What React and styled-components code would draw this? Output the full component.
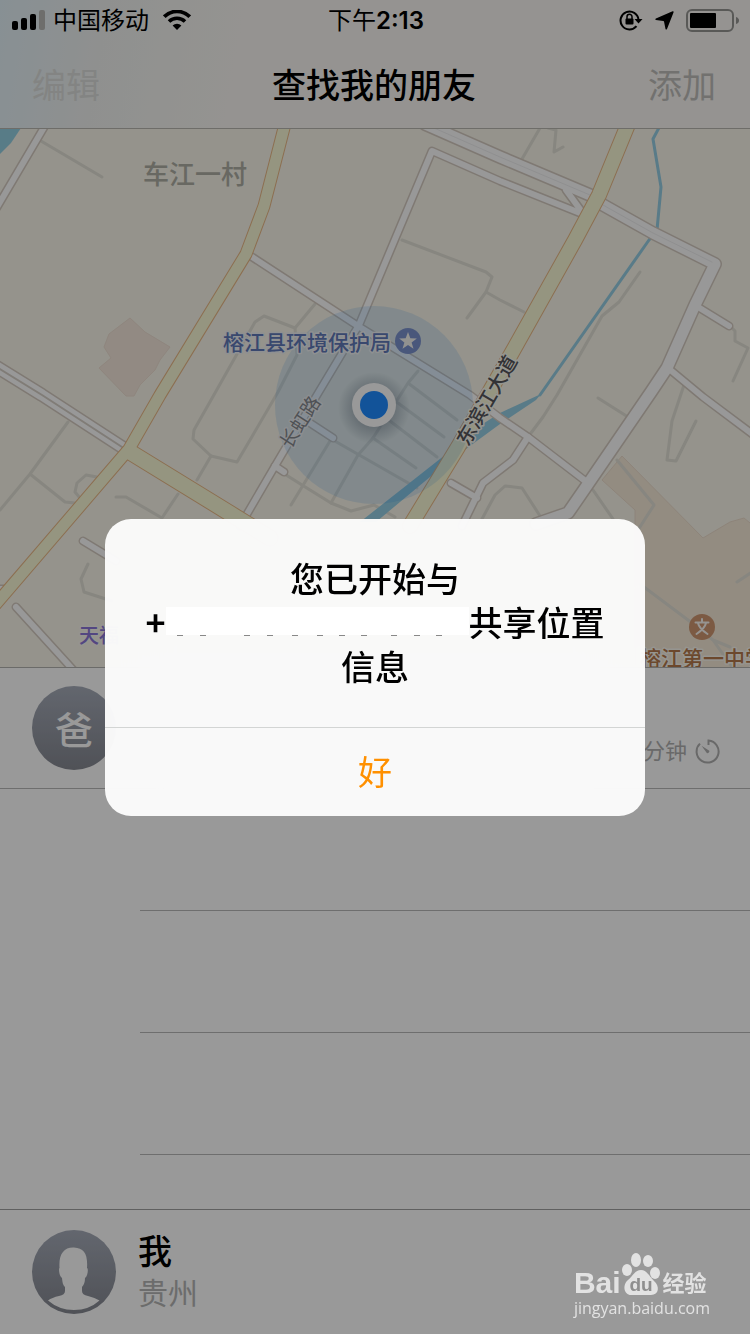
import React from "react";
import styled, { createGlobalStyle } from "styled-components";

const GlobalStyle = createGlobalStyle`
  *, *::before, *::after { box-sizing: border-box; }
  body {
    margin: 0;
    background: #fff;
    color: #000;
    font-family: Inter, "Noto Sans CJK SC", sans-serif;
  }
  button { font: inherit; border: 0; padding: 0; background: none; cursor: pointer; }
`;

const Screen = styled.div`
  position: relative;
  display: flex;
  flex-direction: column;
  min-height: 100vh;
`;

const Header = styled.header`
  background: linear-gradient(100deg, #e2f1f7 0%, #eff1ef 14%, #f8f6f2 32%, #f8f6f2 100%);
  border-bottom: 1px solid #b8b6b0;
`;

const StatusBar = styled.div`
  display: grid;
  grid-template-columns: 1fr auto 1fr;
  align-items: center;
  height: 40px;
  padding: 0 10px 0 12px;
  font-size: 24px;
  line-height: 40px;
`;

const StatusGroup = styled.div`
  display: flex;
  align-items: center;
  justify-content: ${(p) => (p.$end ? "flex-end" : "flex-start")};
  gap: ${(p) => (p.$end ? "12px" : "8px")};
  svg { display: block; flex: none; }
`;

const Carrier = styled.span`
  padding-top: 2px;
  margin-right: 6px;
  line-height: 38px;
`;

const Clock = styled.time`
  padding-top: 2px;
  line-height: 38px;
  font-weight: 600;
  span { font-weight: 400; }
`;

const NavBar = styled.nav`
  display: grid;
  grid-template-columns: 1fr auto 1fr;
  align-items: center;
  height: 88px;
  padding: 4px 34px 0 32px;
`;

const Title = styled.h1`
  margin: 0;
  font-size: 34px;
  line-height: 48px;
  font-weight: 500;
`;

const NavButton = styled.button`
  justify-self: ${(p) => (p.$end ? "end" : "start")};
  font-size: 34px;
  line-height: 48px;
  color: ${(p) => (p.$faint ? "#dbddda" : "#bebdba")};
`;

const MapPane = styled.section`
  height: 539px;
  border-bottom: 1px solid #b2b2b0;
  background: #f8f5e9;
  svg { display: block; width: 100%; height: 100%; }
`;

const MapText = styled.text`
  font-family: "Noto Sans CJK SC", sans-serif;
  font-size: ${(p) => p.$size}px;
  font-weight: ${(p) => p.$weight || 500};
  fill: ${(p) => p.$color};
  stroke: ${(p) => p.$halo || "#faf8f0"};
  stroke-width: 3px;
  stroke-linejoin: round;
  paint-order: stroke;
  text-anchor: ${(p) => p.$anchor || "start"};
`;

const List = styled.ul`
  flex: 1;
  margin: 0;
  padding: 0;
  list-style: none;
`;

const FriendRow = styled.li`
  display: flex;
  align-items: center;
  justify-content: space-between;
  height: 121px;
  padding: 0 30px 0 32px;
  border-bottom: 1px solid #b8b8b8;
`;

const EmptyRow = styled.li`
  height: 122px;
  margin-left: 140px;
  border-bottom: 1px solid #b8b8b8;
`;

const Avatar = styled.div`
  display: flex;
  align-items: center;
  justify-content: center;
  flex: none;
  width: 84px;
  height: 84px;
  border-radius: 50%;
  overflow: hidden;
  background: linear-gradient(#a5abb8, #858891);
  color: #fff;
  font-size: 38px;
  font-weight: 500;
  line-height: 84px;
  span { padding-top: 4px; }
  svg { display: block; }
`;

const Elapsed = styled.div`
  display: flex;
  align-items: center;
  gap: 8px;
  padding-top: 46px;
  color: #afafaf;
  font-size: 22px;
  line-height: 24px;
`;

const Footer = styled.footer`
  display: flex;
  align-items: center;
  gap: 22px;
  height: 125px;
  padding: 0 32px;
  border-top: 1px solid #a0a0a0;
`;

const Me = styled.div`
  display: flex;
  flex-direction: column;
`;

const MyName = styled.span`
  font-size: 34px;
  line-height: 42px;
  font-weight: 500;
`;

const MyPlace = styled.span`
  color: #b5b5b5;
  font-size: 30px;
  line-height: 40px;
`;

const Overlay = styled.div`
  position: fixed;
  inset: 0;
  display: flex;
  align-items: center;
  justify-content: center;
  background: rgba(0, 0, 0, 0.4);
`;

const Dialog = styled.div`
  width: 540px;
  border-radius: 26px;
  overflow: hidden;
  background: rgba(255, 255, 255, 0.94);
  backdrop-filter: blur(30px);
  text-align: center;
`;

const Message = styled.p`
  margin: 0;
  padding: 37px 32px 39px;
  font-family: "Noto Sans CJK SC", sans-serif;
  font-size: 34px;
  line-height: 44px;
  font-weight: 500;
`;

const Plus = styled.span`
  font-weight: 700;
`;

const Redacted = styled.span`
  display: inline-block;
  width: 303px;
  height: 29px;
  vertical-align: baseline;
  svg { display: block; width: 100%; height: 100%; }
`;

const OkButton = styled.button`
  display: block;
  width: 100%;
  height: 89px;
  padding-top: 2px;
  border-top: 1px solid #d3d5d4;
  color: #ff9000;
  font-size: 34px;
  line-height: 86px;
`;

const Watermark = styled.a`
  position: absolute;
  right: 40px;
  bottom: 16px;
  display: flex;
  flex-direction: column;
  color: #e2e2e2;
  font-family: "Open Sans", "Noto Sans CJK SC", sans-serif;
  text-decoration: none;
`;

const Brand = styled.span`
  display: flex;
  align-items: flex-end;
  height: 46px;
  font-family: "Liberation Sans", "Noto Sans CJK SC", sans-serif;
  font-weight: 700;
  font-size: 30px;
  line-height: 30px;
  svg { display: block; margin: 0 2px 2px 0; flex: none; }
`;

const BrandSuffix = styled.span`
  font-size: 22px;
  line-height: 28px;
`;

const Site = styled.span`
  font-size: 16px;
  line-height: 20px;
`;

const LANES = [
  "M-5 589L5 589",
  "M46 124L-4 209",
  "M246 253L358 326L470 395L500 418L528 437L588 483",
  "M580 213L500 181L432 151L359 325L317 395L275 466L240 526",
  "M275 466L284 472",
  "M310 423L333 438",
  "M83 541L116 561",
  "M16 607L76 673",
  "M566 190L582 212",
  "M698 307L729 326",
  "M668 368L703 397L755 436",
  "M451 483L477 498",
  "M462 526L483 483L513 460L528 437",
];

const STREETS = [
  "M-5 366L42 395L122 447",
  "M425 124L500 157L590 195L603 205L653 233L715 264L695 305L667 368L651 392L588 484L568 513L536 524",
];

const AVENUES = [
  { d: "M285 124L264 206L246 254L160 395L129 449L-10 611", w: 12 },
  { d: "M130 452L231 514L270 538", w: 16 },
  { d: "M629 122L599 195L575 240L510 356L458 447L410 526", w: 15 },
];

const PATHS = [
  "M41 141L102 177",
  "M68 422L30 474L0 510M30 474L65 502L75 503",
  "M97 477L86 475L77 483L75 492L80 498",
  "M116 497L126 497L162 518L178 494",
  "M197 480L211 456L193 439L194 430L215 393L237 354L255 322L264 316L295 328L315 304",
  "M211 456L237 462L250 440L278 392L297 355L295 328",
  "M88 564L81 579L84 592L112 601",
  "M402 240L486 272L492 277L486 292L467 318M486 292L500 300L524 312",
  "M540 128L522 159M548 128L556 130L554 152L563 147",
  "M640 272L619 302L602 316L557 395L543 417L531 433",
  "M731 327L735 331L735 341L748 348L733 381",
  "M684 385L672 421L667 460L676 461L696 421",
  "M457 420L408 383M418 371L408 383L373 438L358 455L331 503",
  "M398 403L444 437M390 421L437 457M373 438L416 468M333 440L417 488M330 441L291 505",
  "M283 473L302 485L331 503L351 511L374 505L395 517",
  "M482 519L495 495L505 486L522 488L542 519",
  "M598 398L628 417M593 490L613 519M617 460L654 505L638 530",
  "M640 584L692 623L713 640L730 647M713 640L732 667M737 582L755 570",
];

function CityMap() {
  const line = { fill: "none", strokeLinejoin: "round", strokeLinecap: "round" };
  return (
    <svg viewBox="0 129 750 538" preserveAspectRatio="xMidYMid slice" role="img" aria-label="地图">
      <defs>
        <radialGradient id="dotShade">
          <stop offset="50%" stopColor="#35465a" stopOpacity="0.3" />
          <stop offset="100%" stopColor="#35465a" stopOpacity="0" />
        </radialGradient>
      </defs>
      <path d="M130 318L145 332L170 347L160 360L155 370L140 385L134 396L126 396L99 368L111 358L104 347L109 334Z" fill="#f3e7db" stroke="#eedfd2" />
      <path d="M622 456L703 538L730 522L744 518L755 527V670H635V510L602 480Z" fill="#f5e9d8" stroke="#ecdccb" />
      <g {...line} stroke="#e1dfd5" strokeWidth="3">
        {PATHS.map((d) => <path key={d} d={d} />)}
      </g>
      <path d="M0 125H23L11 143L0 154Z" fill="#93cfe2" />
      <path d="M661 124L653 139L661 187L657 230L649 240L540 395" {...line} stroke="#94cde3" strokeWidth="3" />
      <path d="M541 394L500 413L470 432L445 455L360 522H376L430 477L470 446L500 424L536 400Z" fill="#94cde3" />
      <g {...line} stroke="#d4cac0">
        {LANES.map((d) => <path key={d} d={d} strokeWidth="9" />)}
        {STREETS.map((d) => <path key={d} d={d} strokeWidth="14" />)}
      </g>
      <g {...line} stroke="#fdfdfd">
        {LANES.map((d) => <path key={d} d={d} strokeWidth="6" />)}
        {STREETS.map((d) => <path key={d} d={d} strokeWidth="11" />)}
      </g>
      <path d="M-5 366L42 395L122 447" {...line} stroke="#d6cfc6" strokeWidth="2" />
      <path d="M425 124L500 157L590 195L603 205L653 233L712 262" {...line} stroke="#efeff0" strokeWidth="1" />
      <g {...line} stroke="#e9b886">
        {AVENUES.map((a) => <path key={a.d} d={a.d} strokeWidth={a.w + 1} />)}
      </g>
      <g {...line} stroke="#f9f9d5">
        {AVENUES.map((a) => <path key={a.d} d={a.d} strokeWidth={a.w - 1} />)}
      </g>

      <circle cx="374" cy="405" r="99" fill="#1f84e8" fillOpacity="0.14" />

      <MapText x="143" y="184" $size={26} $color="#adada3" $halo="#f8f5e9">车江一村</MapText>
      <MapText x="223" y="350" $size={21} $color="#5f78b8" $halo="#eef1f4">榕江县环境保护局</MapText>
      <MapText x="0" y="7" $size={19} $weight={400} $color="#84888e" $halo="#e8ecf0" $anchor="middle" transform="translate(300 422) rotate(-57)">长虹路</MapText>
      <MapText x="0" y="8" $size={20} $color="#55555a" $halo="#faf9ee" $anchor="middle" transform="translate(486 400) rotate(-60)">东滨江大道</MapText>
      <MapText x="79" y="643" $size={20} $color="#8a76d8">天福</MapText>
      <MapText x="640" y="666" $size={21} $color="#b5794b">榕江第一中学</MapText>

      <circle cx="408" cy="341" r="13" fill="#7b92ce" />
      <path d="M408 332L410.300 338.300L416.800 338.500L411.600 342.500L413.500 348.800L408 345L402.500 348.800L404.400 342.500L399.200 338.500L405.700 338.300Z" fill="#f4f4f0" />
      <circle cx="702" cy="627" r="13" fill="#cf9670" />
      <g {...line} stroke="#faf6f0" strokeWidth="2">
        <path d="M695.500 622.500H708.500M702 619V622M706 623C705 628 701 631 696.500 634M698 623C699 628 703 631 707.500 634" />
      </g>

      <circle cx="374" cy="408" r="36" fill="url(#dotShade)" />
      <circle cx="374" cy="405" r="22" fill="#fff" />
      <circle cx="374" cy="405" r="14" fill="#1f8bff" />
    </svg>
  );
}

function SignalIcon() {
  return (
    <svg width="33" height="20" viewBox="0 0 33 20" role="img" aria-label="信号">
      <rect x="0" y="11" width="6" height="9" rx="2" />
      <rect x="9" y="8" width="6" height="12" rx="2" />
      <rect x="18" y="4" width="6" height="16" rx="2" />
      <rect x="27" y="0" width="6" height="20" rx="2" fill="#b8b7b5" />
    </svg>
  );
}

function WifiIcon() {
  return (
    <svg width="28" height="20" viewBox="0 0 28 20" fill="none" stroke="#000" role="img" aria-label="无线网络">
      <path d="M1.300 6.700A18 18 0 0 1 26.700 6.700" strokeWidth="3.800" />
      <path d="M6 11.500A11.500 11.500 0 0 1 22 11.500" strokeWidth="3.600" />
      <path d="M14 20L9.600 15.500A6.300 6.300 0 0 1 18.400 15.500Z" fill="#000" stroke="none" />
    </svg>
  );
}

function RotationLockIcon() {
  return (
    <svg width="24" height="22" viewBox="0 0 24 22" fill="none" stroke="#000" role="img" aria-label="方向锁定">
      <path d="M17.500 17.200A9 9 0 1 1 19.500 10.500" strokeWidth="2" />
      <path d="M15.500 10H23.500L19.500 14.500Z" fill="#000" stroke="none" />
      <rect x="6.500" y="9.500" width="8" height="6" rx="1" fill="#000" stroke="none" />
      <path d="M8 10V7.800A2.500 2.500 0 0 1 13 7.800V10" strokeWidth="1.500" />
    </svg>
  );
}

function LocationIcon() {
  return (
    <svg width="19" height="19" viewBox="0 0 19 19" role="img" aria-label="定位">
      <path d="M17.600 0.300Q19 0 18.500 1.400L12 17.900Q11.200 19.200 10.500 17.900L9 10.600Q8.900 10 8.300 9.900L0.900 8.900Q-0.400 8.300 0.900 7.400Z" />
    </svg>
  );
}

function BatteryIcon() {
  return (
    <svg width="54" height="23" viewBox="0 0 54 23" role="img" aria-label="电池">
      <rect x="1" y="1" width="46" height="21" rx="5" fill="none" stroke="#959492" strokeWidth="2" />
      <rect x="4" y="4" width="26" height="15" rx="1" />
      <path d="M50 8Q53 9 53 11.500Q53 14 50 15Z" fill="#959492" />
    </svg>
  );
}

function TimerIcon() {
  return (
    <svg width="25" height="25" viewBox="0 0 25 25" fill="none" stroke="#afafaf" strokeWidth="2" aria-hidden="true">
      <path d="M13.500 6V1.600A11 11 0 1 1 5 4.600" />
      <path d="M6.500 6.800L14.300 11.800A2 2 0 0 1 12 14.200Z" fill="#afafaf" stroke="none" />
    </svg>
  );
}

function PersonIcon() {
  return (
    <svg width="84" height="84" viewBox="0 0 84 84" role="img" aria-label="头像">
      <path d="M42 17.500C32 17 26.500 24 27.500 38C26.500 38 27 46 30 48C30.500 53 31 55 33 57V61Q33 65 27 66Q20 67.500 16 70.500Q27 80 42 80Q57 80 67.500 70.500Q63 67.500 56 66Q50 65 50 61V57Q53 54 53 48C56 46 56.500 38 55 38C56 24 52 18 42 17.500Z" fill="#fff" />
    </svg>
  );
}

function PawIcon() {
  return (
    <svg width="40" height="44" viewBox="0 0 40 44" fill="#e2e2e2" aria-hidden="true">
      <ellipse cx="6" cy="18" rx="5" ry="6" />
      <ellipse cx="15" cy="8" rx="5" ry="7" />
      <ellipse cx="27" cy="9" rx="5" ry="6" />
      <ellipse cx="34" cy="21" rx="5" ry="6" />
      <path d="M20 18C14 18 12 24 7 28C1 33 3 43 10 43H30C38 43 39 34 33 29C28 24 26 18 20 18Z" />
      <text x="20" y="39" textAnchor="middle" fontFamily="Liberation Sans, sans-serif" fontSize="19" fontWeight="700" fill="#8e8e8e">du</text>
    </svg>
  );
}

const DIGIT_FEET = [14, 37, 81, 104, 129, 154, 176, 198, 228, 251, 273];

export default function App() {
  return (
    <>
      <GlobalStyle />
      <Screen>
        <Header>
          <StatusBar>
            <StatusGroup>
              <SignalIcon />
              <Carrier>中国移动</Carrier>
              <WifiIcon />
            </StatusGroup>
            <Clock><span>下午</span>2:13</Clock>
            <StatusGroup $end>
              <RotationLockIcon />
              <LocationIcon />
              <BatteryIcon />
            </StatusGroup>
          </StatusBar>
          <NavBar>
            <NavButton type="button" $faint>编辑</NavButton>
            <Title>查找我的朋友</Title>
            <NavButton type="button" $end>添加</NavButton>
          </NavBar>
        </Header>
        <MapPane>
          <CityMap />
        </MapPane>
        <List>
          <FriendRow>
            <Avatar><span>爸</span></Avatar>
            <Elapsed>
              分钟
              <TimerIcon />
            </Elapsed>
          </FriendRow>
          <EmptyRow aria-hidden="true" />
          <EmptyRow aria-hidden="true" />
          <EmptyRow aria-hidden="true" />
        </List>
        <Footer>
          <Avatar><PersonIcon /></Avatar>
          <Me>
            <MyName>我</MyName>
            <MyPlace>贵州</MyPlace>
          </Me>
        </Footer>
        <Overlay>
          <Dialog role="alertdialog" aria-modal="true" aria-describedby="share-message">
            <Message id="share-message">
              您已开始与<br />
              <Plus>+</Plus><Redacted>
                <svg viewBox="0 0 303 29" preserveAspectRatio="none" aria-hidden="true">
                  <rect width="303" height="28" fill="#fff" />
                  {DIGIT_FEET.map((x) => (
                    <rect key={x} x={x - 3} y="28" width="6" height="1" fill="#888" />
                  ))}
                </svg>
              </Redacted>共享位置<br />
              信息
            </Message>
            <OkButton type="button">好</OkButton>
          </Dialog>
        </Overlay>
        <Watermark href="#jingyan">
          <Brand>
            Bai
            <PawIcon />
            <BrandSuffix>经验</BrandSuffix>
          </Brand>
          <Site>jingyan.baidu.com</Site>
        </Watermark>
      </Screen>
    </>
  );
}
